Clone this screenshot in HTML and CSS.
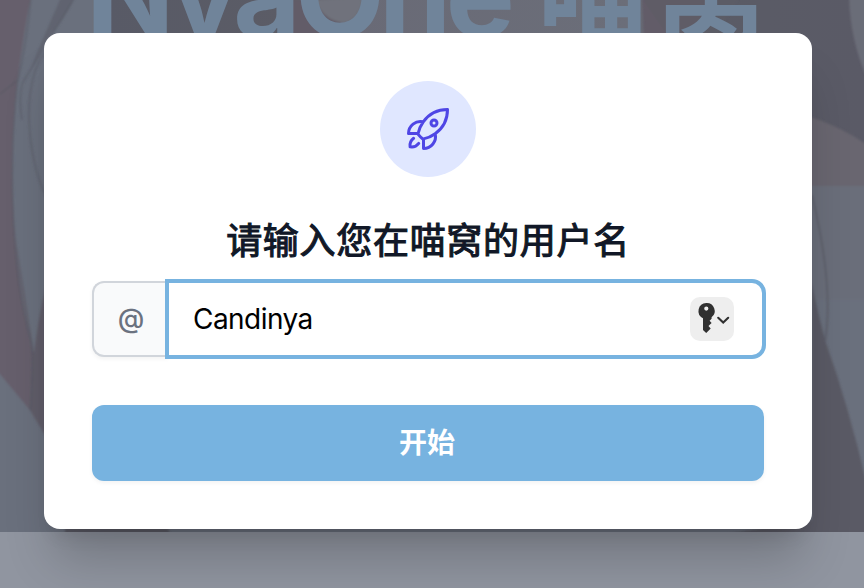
FILE: index.html
```html
<!DOCTYPE html>
<html lang="zh-CN">
<head>
<meta charset="utf-8">
<title>喵窝</title>
<link rel="stylesheet" href="styles.css">
</head>
<body>
<div class="hero" aria-hidden="true">
  <svg class="hero-art" viewBox="0 0 864 532" preserveAspectRatio="none">
    <defs>
      <filter id="soft"><feGaussianBlur stdDeviation="1"/></filter>
      <linearGradient id="top" x2="1"><stop offset="0" stop-color="#6c717c"/><stop offset=".02" stop-color="#585a66"/><stop offset=".25" stop-color="#5b5c66"/><stop offset=".32" stop-color="#696a76"/><stop offset=".7" stop-color="#6b6e79"/><stop offset=".75" stop-color="#5a5c66"/><stop offset="1" stop-color="#5a5a66"/></linearGradient>
    </defs>
    <rect width="864" height="532" fill="#6a707d"/>
    <rect x="92" width="772" height="190" fill="url(#top)"/>
    <g filter="url(#soft)">
      <path d="M-5-5H31C25 25 21 55 17 82C9 150 12 210 18 265C23 310 29 330 32 354L30 410L-5 368Z" fill="#665f6c"/>
      <path d="M16 240C22 300 30 330 32 354L30 410L46 437V285C38 320 36 340 34 354Z" fill="#605d69"/>
      <path d="M62-5H76Q63 22 50 35L30 70Q40 45 62-5Z" fill="#606470"/>
      <path d="M31-5Q28 35 17 85C8 175 12 280 32 345Q34 375 30 410M46 52C20 80 27 159 46 196M76-5Q43 50 23 82Q18 95 22 120M0 94L18 80" fill="none" stroke="#585965" stroke-opacity=".65" stroke-width="1.5"/>
      <path d="M291 0H350L335 38H291Z" fill="#625b67"/>
      <path d="M315 0Q323 21 345 23Q362 17 362-3Z" fill="#70727c"/>
      <path d="M642-4H715L690 38H644Z" fill="#625b67"/>
      <path d="M642-2L670 38H715L740-4Z" fill="#5c5b66" opacity=".5"/>
      <path d="M849-5Q850 44 870 84V-5Z" fill="#6b6d78"/>
      <path d="M805 115Q843 127 870 147V192H805Z" fill="#696670"/>
      <path d="M800 186H870V300H800Z" fill="#6a6e7a"/>
      <path d="M812 283Q818 315 826 343Q850 410 868 490V540H690L812 520Z" fill="#5a5a65"/>
      <path d="M65 520H165L172 540H65Z" fill="#5a5a65"/>
      <path d="M812 195C824 245 832 301 825 342" fill="none" stroke="#5e616c" stroke-width="2"/>
    </g>
  </svg>
  <div class="hero-title"><span class="latin">NyaOne</span><span class="han">喵窝</span></div>
</div>
<main class="dialog">
  <div class="badge">
    <svg class="rocket" viewBox="0 0 24 24" fill="none" stroke="currentColor" stroke-width="1.5" stroke-linecap="round" stroke-linejoin="round"><path d="M15.59 14.37a6 6 0 0 1-5.84 7.38v-4.8m5.84-2.58a14.98 14.98 0 0 0 6.16-12.12A14.98 14.98 0 0 0 9.631 8.41m5.96 5.96a14.926 14.926 0 0 1-5.841 2.58m-.119-8.54a6 6 0 0 0-7.381 5.84h4.8m2.581-5.84a14.927 14.927 0 0 0-2.58 5.84m2.699 2.7c-.103.021-.207.041-.311.06a15.09 15.09 0 0 1-2.448-2.448 14.9 14.9 0 0 1 .06-.312m-2.24 2.39a4.493 4.493 0 0 0-1.757 4.306 4.493 4.493 0 0 0 4.306-1.758M16.5 9a1.5 1.5 0 1 1-3 0 1.5 1.5 0 0 1 3 0Z"/></svg>
  </div>
  <h1 class="title">请输入您在喵窝的用户名</h1>
  <div class="field">
    <span class="prefix">@</span>
    <div class="input"><span class="value">Candinya</span>
      <button class="key" type="button">
        <svg viewBox="0 0 44 44"><path fill="#303030" fill-rule="evenodd" d="M16.3 6a8 8 0 0 0-3.3 15.2v11.7l3.2 3.1 4.5-4.5-2.2-2.5 3.1-3-2-2.2 2-2v-1.5A8 8 0 0 0 16.3 6Zm0 3.5a2.1 2.1 0 1 1 0 4.2 2.1 2.1 0 0 1 0-4.2Z"/><path d="m28.2 20.8 5 4.8 5-4.8" fill="none" stroke="#303030" stroke-width="2.1" stroke-linecap="round"/></svg>
      </button>
    </div>
  </div>
  <button class="submit" type="button">开始</button>
</main>
</body>
</html>
```
FILE: styles.css
```css
* { box-sizing: border-box; }
body {
  margin: 0;
  width: 864px;
  height: 588px;
  overflow: hidden;
  position: relative;
  padding: 33px 52px 0 44px;
  background: #9095a0;
  font-family: Inter, "Noto Sans CJK SC", sans-serif;
}
.hero {
  position: absolute;
  inset: 0 0 auto;
  height: 532px;
  overflow: hidden;
}
.hero-art { display: block; width: 864px; height: 532px; }
.hero-title {
  position: absolute;
  left: 86px;
  top: -83px;
  display: flex;
  white-space: nowrap;
  font-size: 116px;
  line-height: 156px;
  font-weight: 700;
  color: #70849a;
}
.latin { width: 452px; letter-spacing: -5.5px; }
.han { font-size: 110px; letter-spacing: 8px; }
.dialog {
  position: relative;
  display: flex;
  flex-direction: column;
  align-items: center;
  width: 768px;
  height: 496px;
  padding: 48px;
  border-radius: 16px;
  background: #fff;
  box-shadow: 0 40px 50px -10px rgba(0, 0, 0, .2), 0 16px 20px -12px rgba(0, 0, 0, .12);
}
.badge {
  display: grid;
  place-items: center;
  width: 96px;
  height: 96px;
  border-radius: 50%;
  background: #e0e7ff;
  color: #4f46e5;
}
.rocket { width: 48px; height: 48px; }
.title {
  margin: 40px 0 0;
  height: 48px;
  line-height: 48px;
  font-size: 36px;
  font-weight: 400;
  -webkit-text-stroke: 1.1px #111827;
  letter-spacing: .7px;
  color: #111827;
  white-space: nowrap;
}
.field { display: flex; width: 100%; height: 76px; margin-top: 16px; }
.prefix {
  width: 76px;
  border: 2px solid #d1d5db;
  border-right: 0;
  border-radius: 12px 0 0 12px;
  background: #f9fafb;
  color: #6b7280;
  font-size: 27px;
  font-weight: 500;
  line-height: 71px;
  text-align: center;
  box-shadow: 0 2px 4px rgba(0, 0, 0, .05);
}
.input {
  display: flex;
  flex: 1;
  align-items: center;
  justify-content: space-between;
  margin: -2px -2px -2px -3px;
  padding: 0 28px 0 24px;
  border: 4px solid #77b3e0;
  border-radius: 0 14px 14px 0;
  background: #fff;
  font-size: 28px;
  letter-spacing: -.55px;
  color: #000;
}
.key {
  width: 44px;
  height: 44px;
  padding: 0;
  border: 0;
  border-radius: 10px;
  background: #eee;
}
.key svg { display: block; width: 44px; height: 44px; }
.submit {
  width: 100%;
  height: 76px;
  margin-top: 48px;
  padding: 0 2px 0 0;
  border: 0;
  border-radius: 12px;
  background: #77b3e0;
  color: #fff;
  font: 600 28px/76px Inter, "Noto Sans CJK SC", sans-serif;
  box-shadow: 0 2px 4px rgba(0, 0, 0, .05);
}
```
